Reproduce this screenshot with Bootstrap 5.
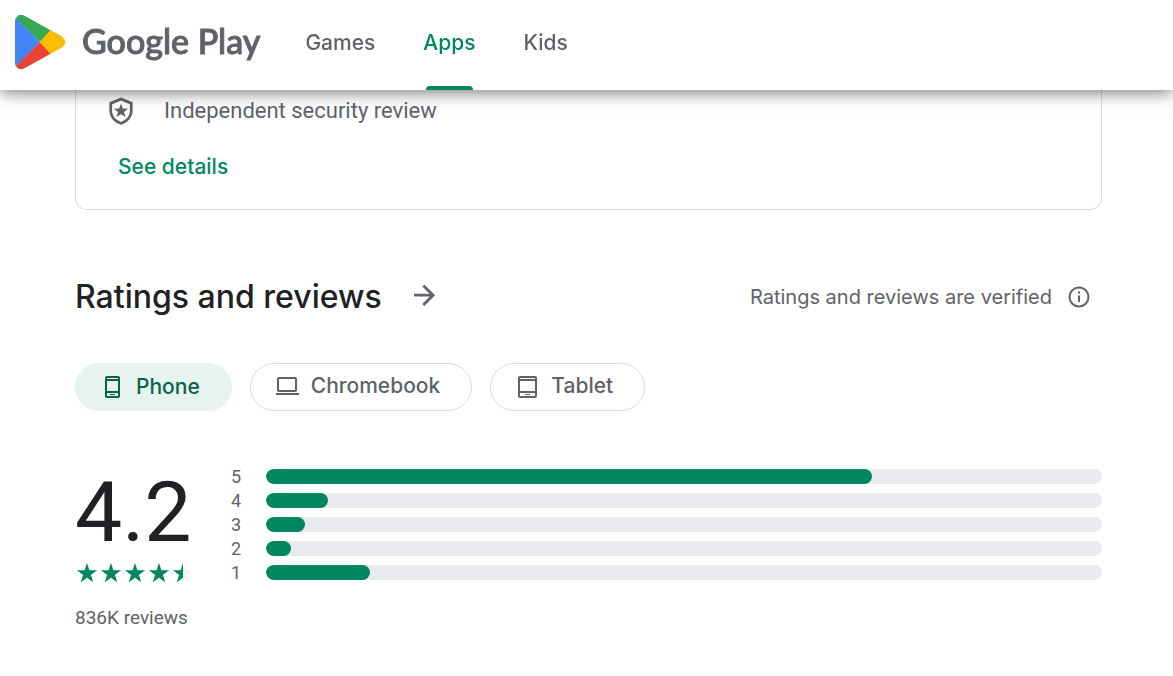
<!DOCTYPE html>
<html lang="en">
<head>
<meta charset="utf-8">
<meta name="viewport" content="width=device-width, initial-scale=1">
<title>Apps on Google Play</title>
<link href="https://cdn.jsdelivr.net/npm/bootstrap@5.3.0/dist/css/bootstrap.min.css" rel="stylesheet">
<style>
:root{--play-green:#01875f;--play-green-dark:#056449;--play-gray:#5f6368;--play-line:#dadce0;--play-ink:#202124}
body{font-family:Roboto,sans-serif;color:var(--play-gray);background:#fff}
.brand-font{font-family:Inter,sans-serif;font-weight:500;font-variant-ligatures:none}
svg{display:block;flex-shrink:0;fill:currentColor}
.top-bar{height:90px;padding:0 15px;box-shadow:0 2px 16px rgba(0,0,0,.55);background:#fff}
.logo-text{font-family:Lato,sans-serif;font-size:34px;line-height:40px;color:var(--play-gray);-webkit-text-stroke:1px var(--play-gray)}
.top-nav{gap:48px;margin-left:45px}
.top-nav a{position:relative;height:90px;line-height:86px;font-size:21px;color:var(--play-gray);text-decoration:none}
.top-nav a.active{color:var(--play-green)}
.top-nav a.active::after{content:"";position:absolute;left:3px;right:3px;bottom:0;height:4px;border-radius:4px 4px 0 0;background:var(--play-green)}
.page-body{padding:90px 71px 48px 75px}
.safety-card{border:1px solid var(--play-line);border-top:0;border-radius:0 0 12px 12px;padding:2px 30px 24px}
.safety-text{font-size:22px;line-height:37px}
.details-link{font-size:21px;line-height:36px;color:var(--play-green);text-decoration:none}
.section-title{font-size:32px;line-height:46px;color:var(--play-ink);margin:0}
.verified{font-size:20px;line-height:30px}
.bare-btn{border:0;padding:0;background:none;color:var(--play-gray)}
.chips{column-gap:18px;margin-top:43px}
.chip{height:48px;border:1px solid var(--play-line);border-radius:24px;padding:0 31px 2px 25px;font-size:21px;background:#fff;color:var(--play-gray)}
.chip.selected{border-color:#e6f3ef;background:#e6f3ef;color:var(--play-green-dark);padding-bottom:0}
.summary{margin-top:53px}
.score{font-size:84px;line-height:98px;color:var(--play-ink)}
.count{font-size:19px;line-height:24px}
.rating-side{width:156px}
.rating-row{height:24px;font-size:18px}
.rating-row span{width:35px}
.rating-row .progress{height:15px;border-radius:8px;background:#e8eaed}
.rating-row .progress-bar{border-radius:8px;background:var(--play-green)}
.stars{color:var(--play-green)}
</style>
</head>
<body>
<header class="top-bar fixed-top d-flex align-items-center">
  <a href="#" class="d-flex align-items-center text-decoration-none h-100 pb-2">
    <svg width="51" height="58" viewBox="0 -2 51 58" aria-hidden="true">
      <path fill="#4285f4" d="M1 3.500Q0 5 0 7v42q0 2 1 3.500L25 28z"/>
      <path fill="#34a853" d="M1 4Q4-1 9 1.500L36 16.500 25 28z"/>
      <path fill="#ea4335" d="M1 52q3 5 8 2.500l27-15L25 28z"/>
      <path fill="#fbbc04" d="M35.500 16 47 22.500q7 5.500 0 11L35.500 40 24.500 28z"/>
    </svg>
    <span class="brand-font logo-text ms-3">Google Play</span>
  </a>
  <nav class="top-nav brand-font d-flex">
    <a href="#">Games</a>
    <a href="#" class="active" aria-current="page">Apps</a>
    <a href="#">Kids</a>
  </nav>
</header>

<main class="page-body">
  <section class="safety-card">
    <div class="d-flex align-items-center">
      <svg width="30" height="30" viewBox="0 0 24 24" aria-hidden="true">
        <path fill-rule="evenodd" d="M12 1.200 21.300 5v7c0 5-4 9.400-9.300 11C6.700 21.400 2.700 17 2.700 12V5zM12 3.600 4.900 6.500V12c0 3.800 3 7.300 7.100 8.700 4.100-1.400 7.100-4.900 7.100-8.700V6.500z"/>
        <path d="m12 6 1.500 3.900 4.200.2-3.300 2.600 1.200 4.100L12 14.500l-3.600 2.300 1.200-4.100-3.300-2.600 4.200-.2z"/>
      </svg>
      <span class="safety-text ms-4 ps-1">Independent security review</span>
    </div>
    <a href="#" class="details-link brand-font d-inline-block mt-3 ms-2 pt-1 ps-1">See details</a>
  </section>

  <section class="mt-5 pt-3">
    <div class="d-flex justify-content-between align-items-center">
      <div class="d-flex align-items-center">
        <h2 class="section-title brand-font">Ratings and reviews</h2>
        <button class="bare-btn ms-4" aria-label="See all reviews">
          <svg width="36" height="36" viewBox="0 0 36 36"><path d="m18.300 5.500 10.800 10.700-10.800 10.700-2-1.900 7.400-7.400H8v-2.800h15.700l-7.400-7.400z"/></svg>
        </button>
      </div>
      <div class="verified brand-font fw-normal d-flex align-items-center">
        <span>Ratings and reviews are verified</span>
        <button class="bare-btn ms-3 me-2 pe-1" aria-label="About ratings">
          <svg width="22" height="22" viewBox="0 0 22 22"><circle cx="11" cy="11" r="9.500" fill="none" stroke="currentColor" stroke-width="2"/><path d="M10 9.500h2V16h-2zM10 5.500h2v2h-2z"/></svg>
        </button>
      </div>
    </div>

    <div class="chips d-flex flex-wrap">
      <button class="chip selected brand-font d-flex align-items-center" aria-pressed="true">
        <svg class="me-2" width="27" height="24" viewBox="0 0 27 24"><path fill-rule="evenodd" d="M6 1h11q2 0 2 2v18q0 2-2 2H6q-2 0-2-2V3q0-2 2-2zm0 2v1h11V3zm0 3v10h11V6zm0 12v3h11v-3z"/><path d="M9 19h5v1H9z"/></svg>
        Phone
      </button>
      <button class="chip brand-font d-flex align-items-center" aria-pressed="false">
        <svg class="me-2" width="27" height="24" viewBox="0 0 27 24"><path fill-rule="evenodd" d="M3 3h16q2 0 2 2v11q0 2-2 2H3q-2 0-2-2V5q0-2 2-2zm0 2v11h16V5zM0 19h23v2H0z"/></svg>
        Chromebook
      </button>
      <button class="chip brand-font d-flex align-items-center" aria-pressed="false">
        <svg class="me-2" width="27" height="24" viewBox="0 0 27 24"><path fill-rule="evenodd" d="M4 2h15q2 0 2 2v18q0 2-2 2H4q-2 0-2-2V4q0-2 2-2zm0 2v1h15V4zm0 3v10h15V7zm0 12v3h15v-3z"/><path d="M9 20h5v1H9z"/></svg>
        Tablet
      </button>
    </div>

    <div class="summary d-flex">
      <div class="rating-side">
        <div class="score">4.2</div>
        <svg class="stars" width="120" height="24" viewBox="0 0 120 24" role="img" aria-label="Rated 4.2 stars out of five">
          <defs>
            <path id="star" d="m12 1 2.400 7.300h7.700l-6.200 4.600 2.300 7.300L12 15.700l-6.200 4.500 2.300-7.300-6.200-4.600h7.700z"/>
            <clipPath id="half"><path d="M0 0h12v24H0z"/></clipPath>
          </defs>
          <use href="#star"/><use href="#star" x="24"/><use href="#star" x="48"/><use href="#star" x="72"/>
          <use href="#star" x="96" fill="#f1f3f4"/>
          <g transform="translate(96)"><use href="#star" clip-path="url(#half)"/></g>
        </svg>
        <div class="count mt-3 pt-1">836K reviews</div>
      </div>
      <div class="flex-grow-1">
        <div class="rating-row d-flex align-items-center"><span>5</span><div class="progress flex-grow-1"><div class="progress-bar" style="width:72.500%"></div></div></div>
        <div class="rating-row d-flex align-items-center"><span>4</span><div class="progress flex-grow-1"><div class="progress-bar" style="width:7.400%"></div></div></div>
        <div class="rating-row d-flex align-items-center"><span>3</span><div class="progress flex-grow-1"><div class="progress-bar" style="width:4.700%"></div></div></div>
        <div class="rating-row d-flex align-items-center"><span>2</span><div class="progress flex-grow-1"><div class="progress-bar" style="width:3%"></div></div></div>
        <div class="rating-row d-flex align-items-center"><span>1</span><div class="progress flex-grow-1"><div class="progress-bar" style="width:12.400%"></div></div></div>
      </div>
    </div>
  </section>
</main>
<script src="https://cdn.jsdelivr.net/npm/bootstrap@5.3.0/dist/js/bootstrap.bundle.min.js"></script>
</body>
</html>
